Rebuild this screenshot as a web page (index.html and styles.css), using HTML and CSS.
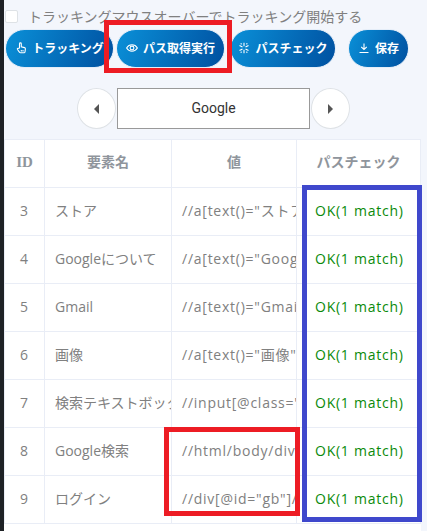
FILE: index.html
```html
<!DOCTYPE html>
<html lang="ja">
<head>
    <meta charset="UTF-8">
    <meta name="viewport" content="width=device-width, initial-scale=1.0">
    <title>パス取得</title>
    <link rel="stylesheet" href="styles.css">
</head>
<body>
    <div class="panel">
        <label class="track-option">
            <span class="checkbox"></span>
            トラッキングマウスオーバーでトラッキング開始する
        </label>
        <div class="toolbar">
            <button class="btn btn-track">
                <svg class="icon" viewBox="0 0 12 12"><path d="M4.500 6V1.800a.9.9 0 0 1 1.800 0v3l3.200.8c.7.2 1 .6.9 1.300l-.4 3.100c-.1.500-.4.800-.9.800H5.500c-.4 0-.7-.2-.9-.5L2.500 7.500c-.5-.8.300-1.600 1-1.100z"/><path d="M6.300 8v1.500M8 8v1.500"/></svg>
                トラッキング
            </button>
            <button class="btn btn-get">
                <svg class="icon" viewBox="0 0 12 12"><path d="M.6 6C1.900 3.800 3.800 2.800 6 2.800s4.100 1 5.400 3.200C10.100 8.200 8.200 9.200 6 9.200S1.900 8.200.6 6z"/><circle cx="6" cy="6" r="1.900"/></svg>
                パス取得実行
            </button>
            <button class="btn btn-check">
                <svg class="icon" viewBox="0 0 12 12"><path d="M6 .8v3.400M6 7.800v3.400M1.500 3.400l3 1.700M7.500 6.900l3 1.700M10.500 3.400l-3 1.700M4.500 6.900l-3 1.700"/><path d="M2.800 1.200l.7 1.200M9.200 1.200l-.7 1.200M2.800 10.800l.7-1.200M9.200 10.800l-.7-1.200"/></svg>
                パスチェック
            </button>
            <button class="btn btn-save">
                <svg class="icon" viewBox="0 0 12 12"><path d="M6 1.500v6M3.200 4.800L6 7.500l2.800-2.700M1.500 10.500h9"/></svg>
                保存
            </button>
        </div>
        <div class="pager">
            <button class="round-btn"><span class="arrow-left"></span></button>
            <div class="site-name">Google</div>
            <button class="round-btn"><span class="arrow-right"></span></button>
        </div>
        <div class="table-wrap">
            <table class="path-table">
                <thead>
                    <tr>
                        <th class="col-id">ID</th>
                        <th class="col-name">要素名</th>
                        <th class="col-value">値</th>
                        <th class="col-check">パスチェック</th>
                    </tr>
                </thead>
                <tbody>
                    <tr><td class="num">3</td><td class="name">ストア</td><td>//a[text()="ストア"]</td><td class="ok">OK(1 match)</td></tr>
                    <tr><td class="num">4</td><td class="name">Googleについて</td><td>//a[text()="Googleについて"]</td><td class="ok">OK(1 match)</td></tr>
                    <tr><td class="num">5</td><td class="name">Gmail</td><td>//a[text()="Gmail"]</td><td class="ok">OK(1 match)</td></tr>
                    <tr><td class="num">6</td><td class="name">画像</td><td>//a[text()="画像"]</td><td class="ok">OK(1 match)</td></tr>
                    <tr><td class="num">7</td><td class="name">検索テキストボックス</td><td>//input[@class="gLFyf"]</td><td class="ok">OK(1 match)</td></tr>
                    <tr><td class="num">8</td><td class="name">Google検索</td><td>//html/body/div[1]/div[3]</td><td class="ok">OK(1 match)</td></tr>
                    <tr><td class="num">9</td><td class="name">ログイン</td><td>//div[@id="gb"]/div/div[2]</td><td class="ok">OK(1 match)</td></tr>
                </tbody>
            </table>
        </div>
    </div>
    <div class="mark mark-get"></div>
    <div class="mark mark-values"></div>
    <div class="mark mark-check"></div>
</body>
</html>
```

FILE: styles.css
```css
* {
    box-sizing: border-box;
}
html, body {
    margin: 0;
    height: 100%;
    overflow: hidden;
}
body {
    position: relative;
    background-color: #f3f6fc;
    border-left: 4px solid #1e2125;
    font-family: "Open Sans", "Noto Sans CJK JP", sans-serif;
    color: #808080;
}
.panel {
    display: flex;
    flex-direction: column;
    width: 417px;
    height: 100%;
}
.track-option {
    display: flex;
    align-items: center;
    gap: 10px;
    height: 29px;
    padding: 3px 0 0 1px;
    font-size: 14px;
    color: #808080;
}
.checkbox {
    width: 13px;
    height: 13px;
    background-color: #fff;
    border: 1px solid #dee2e6;
    border-radius: 2px;
}
.toolbar {
    display: flex;
    height: 39px;
    padding-left: 1px;
}
.btn {
    display: flex;
    align-items: center;
    justify-content: center;
    gap: 5px;
    height: 39px;
    padding: 0 0 1px;
    border: 1px solid #e4edf8;
    border-radius: 20px;
    background: linear-gradient(110deg, #0a90d8, #0050a0);
    color: #fff;
    font-family: inherit;
    font-size: 12px;
    font-weight: 700;
    white-space: nowrap;
    overflow: hidden;
}
.btn-track { width: 109px; }
.btn-get { width: 109px; margin-left: 2px; }
.btn-check { width: 106px; margin-left: 5px; }
.btn-save { width: 61px; margin-left: 12px; }
.icon {
    flex: none;
    width: 12px;
    height: 12px;
    fill: none;
    stroke: #fff;
    stroke-width: 1.100;
}
.pager {
    display: flex;
    justify-content: center;
    gap: 1px;
    height: 41px;
    margin-top: 20px;
    padding-left: 2px;
}
.round-btn {
    display: flex;
    align-items: center;
    justify-content: center;
    width: 39px;
    height: 41px;
    padding: 0;
    background-color: #fff;
    border: 1px solid #dee2e6;
    border-radius: 50%;
}
.arrow-left, .arrow-right {
    width: 0;
    height: 0;
    border-top: 5px solid transparent;
    border-bottom: 5px solid transparent;
}
.arrow-left { border-right: 5px solid #555; }
.arrow-right { border-left: 5px solid #555; }
.site-name {
    width: 193px;
    height: 41px;
    line-height: 39px;
    background-color: #fff;
    border: 1px solid #999;
    text-align: center;
    font-family: Roboto, sans-serif;
    font-size: 14px;
    color: #333;
}
.table-wrap {
    flex: 1;
    margin-top: 10px;
    background-color: #fff;
}
.path-table {
    width: 417px;
    border-collapse: collapse;
    table-layout: fixed;
    font-size: 14px;
    letter-spacing: 0.75px;
}
.path-table th, .path-table td {
    height: 48px;
    padding: 0 0 2px 10px;
    border: 1px solid #e9edf6;
    line-height: 1;
    white-space: nowrap;
    overflow: hidden;
}
.path-table th {
    padding: 0 0 3px;
    font-weight: 700;
    letter-spacing: 0;
    color: #8f959c;
    text-align: center;
}
.path-table .col-id {
    width: 40px;
    font-family: "Liberation Serif", serif;
    font-size: 15px;
}
.col-name { width: 127px; }
.col-value { width: 125px; }
.path-table .num {
    padding: 0 0 2px;
    text-align: center;
}
.path-table .name {
    letter-spacing: 0;
}
.path-table .ok {
    padding-left: 18px;
    color: #0a8a0a;
}
.mark {
    position: absolute;
    border: 5px solid #ed1c24;
}
.mark-get {
    left: 100px;
    top: 20px;
    width: 128px;
    height: 53px;
}
.mark-values {
    left: 160px;
    top: 427px;
    width: 136px;
    height: 89px;
}
.mark-check {
    left: 298px;
    top: 185px;
    width: 120px;
    height: 337px;
    border-color: #3f48cc;
}
```
